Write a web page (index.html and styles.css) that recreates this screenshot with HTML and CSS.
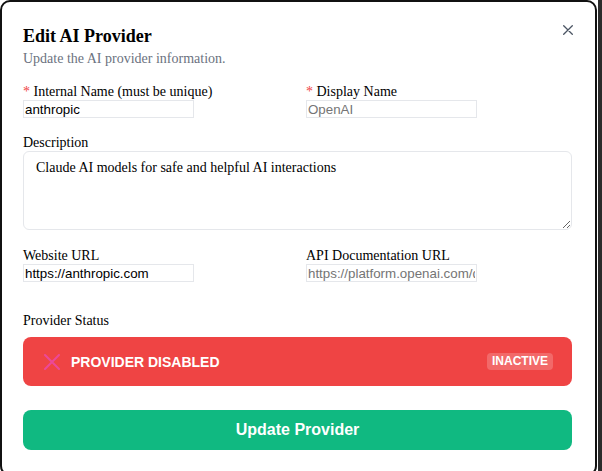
FILE: index.html
```html
<!DOCTYPE html>
<html>
<head>
<meta charset="utf-8">
<link rel="stylesheet" href="styles.css">
</head>
<body>
<div class="page">
  <div class="dialog">
    <button class="close" aria-label="Close">
      <svg width="10" height="10" viewBox="0 0 10 10"><path d="M0.7 0.7 L9.3 9.3 M9.3 0.7 L0.7 9.3" stroke="#4b5563" stroke-width="1.3" fill="none" stroke-linecap="round"/></svg>
    </button>
    <div class="header">
      <h2 class="title">Edit AI Provider</h2>
      <p class="subtitle">Update the AI provider information.</p>
    </div>
    <form class="form">
      <div class="row two">
        <div class="field">
          <label class="label"><span class="req">*</span> Internal Name (must be unique)</label>
          <input class="input" type="text" value="anthropic">
        </div>
        <div class="field">
          <label class="label"><span class="req">*</span> Display Name</label>
          <input class="input" type="text" placeholder="OpenAI">
        </div>
      </div>
      <div class="row desc">
        <label class="label">Description</label>
        <textarea class="textarea">Claude AI models for safe and helpful AI interactions</textarea>
      </div>
      <div class="row two urls">
        <div class="field">
          <label class="label">Website URL</label>
          <input class="input" type="text" value="https://anthropic.com">
        </div>
        <div class="field">
          <label class="label">API Documentation URL</label>
          <input class="input" type="text" placeholder="https://platform.openai.com/docs">
        </div>
      </div>
      <div class="status">
        <label class="label">Provider Status</label>
        <div class="status-bar">
          <svg class="status-icon" width="16" height="16" viewBox="0 0 16 16"><path d="M1 1 L15 15 M15 1 L1 15" stroke="#ec4899" stroke-width="2" fill="none" stroke-linecap="round"/></svg>
          <span class="status-text">PROVIDER DISABLED</span>
          <span class="badge">INACTIVE</span>
        </div>
      </div>
      <button type="button" class="submit">Update Provider</button>
    </form>
  </div>
  <div class="backdrop"></div>
</div>
</body>
</html>
```
FILE: styles.css
```css
html, body {
  margin: 0;
  padding: 0;
  height: 100%;
  overflow: hidden;
  background: #ffffff;
}
.page {
  display: flex;
  height: 100%;
}
.dialog {
  position: relative;
  box-sizing: border-box;
  width: 597px;
  height: 476px;
  flex: none;
  background: #ffffff;
  border: 2px solid #111111;
  border-radius: 10px;
  padding: 23px 22px 0 21px;
  font-family: "Liberation Serif", "Times New Roman", serif;
  color: #000;
}
.backdrop {
  flex: 1;
  background: #2b2b2b;
  margin-left: 1px;
}
.close {
  position: absolute;
  top: 22px;
  right: 21px;
  width: 12px;
  height: 12px;
  padding: 1px;
  border: none;
  background: transparent;
  display: flex;
  align-items: center;
  justify-content: center;
  cursor: pointer;
}
.header {
  display: flex;
  flex-direction: column;
  gap: 2px;
}
.title {
  margin: 0;
  font-size: 18px;
  line-height: 22px;
  font-weight: bold;
}
.subtitle {
  margin: 0;
  font-size: 14px;
  line-height: 20px;
  color: #6b7280;
}
.form {
  margin: 15px 0 0 0;
  display: flex;
  flex-direction: column;
}
.row.two {
  display: grid;
  grid-template-columns: 1fr 1fr;
  column-gap: 16px;
}
.field {
  display: flex;
  flex-direction: column;
  align-items: flex-start;
}
.label {
  font-size: 14px;
  line-height: 16px;
  display: block;
}
.req {
  color: #ef4444;
}
.input {
  box-sizing: border-box;
  width: 171px;
  height: 18px;
  margin: 0;
  padding: 0 1px;
  border: 1px solid #e5e7eb;
  font-family: "Liberation Sans", Arial, sans-serif;
  font-size: 13.33px;
  color: #000;
  background: #fff;
  outline: none;
}
.input::placeholder {
  color: #757575;
}
.row.desc {
  margin-top: 17px;
  display: flex;
  flex-direction: column;
}
.textarea {
  display: block;
  box-sizing: border-box;
  width: 549px;
  height: 79px;
  margin: 0;
  padding: 8px 12px;
  border: 1px solid #e5e7eb;
  border-radius: 6px;
  font-family: "Liberation Serif", "Times New Roman", serif;
  font-size: 14px;
  line-height: 16px;
  color: #000;
  resize: vertical;
  outline: none;
}
.row.urls {
  margin-top: 18px;
}
.status {
  margin-top: 31px;
  display: flex;
  flex-direction: column;
  gap: 8px;
}
.status-bar {
  box-sizing: border-box;
  width: 549px;
  height: 49px;
  background: #ef4444;
  border-radius: 8px;
  display: flex;
  align-items: center;
  padding: 0 19px 0 21px;
  font-family: "Liberation Sans", Arial, sans-serif;
  color: #fff;
}
.status-icon {
  flex: none;
}
.status-text {
  margin-left: 11px;
  font-size: 14px;
  font-weight: bold;
  flex: 1;
}
.badge {
  background: rgba(255, 255, 255, 0.2);
  border-radius: 4px;
  font-size: 12px;
  font-weight: bold;
  line-height: 15px;
  padding: 1px 5px;
}
.submit {
  margin-top: 24px;
  width: 549px;
  height: 40px;
  border: none;
  border-radius: 8px;
  background: #10b981;
  color: #fff;
  font-family: "Liberation Sans", Arial, sans-serif;
  font-size: 16px;
  font-weight: bold;
  cursor: pointer;
}
```
